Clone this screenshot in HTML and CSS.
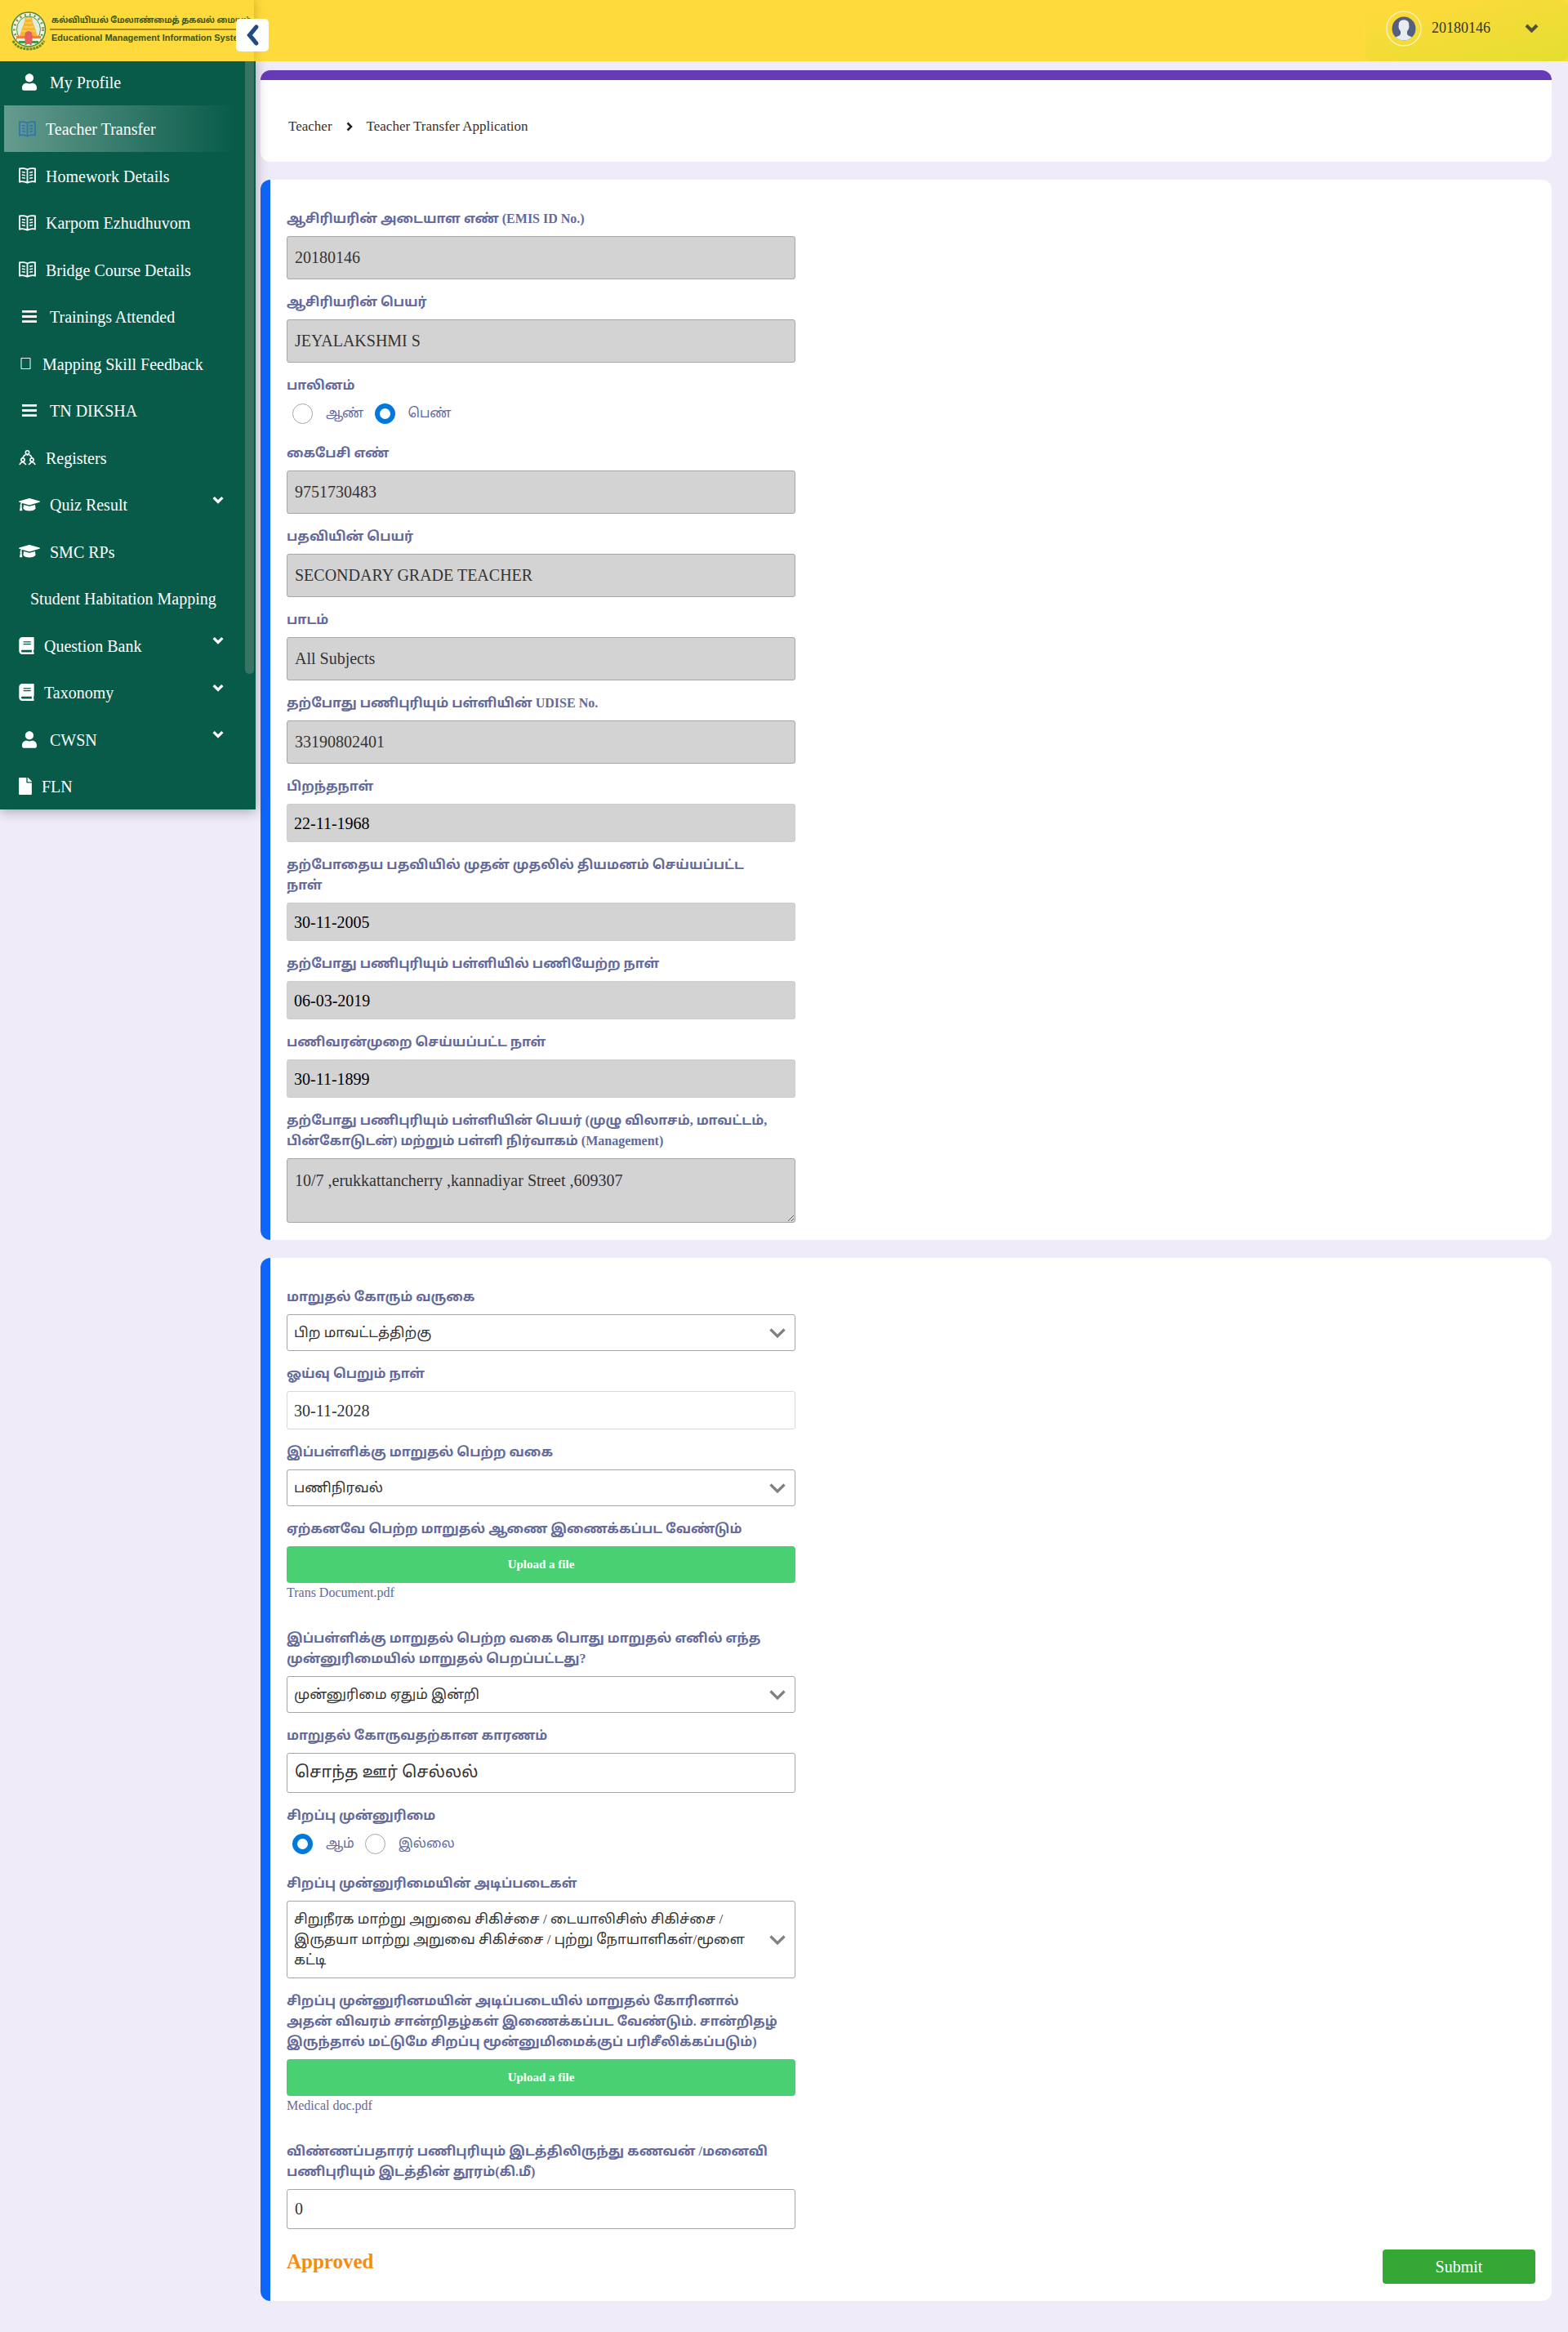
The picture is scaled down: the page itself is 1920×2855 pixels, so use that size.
FILE: index.html
```html
<!DOCTYPE html>
<html lang="ta">
<head>
<meta charset="utf-8">
<meta name="viewport" content="width=device-width, initial-scale=1">
<title>Teacher Transfer Application</title>
<link rel="stylesheet" href="styles.css">
</head>
<body>
<svg class="sprite" aria-hidden="true">
  <symbol id="i-user" viewBox="0 0 448 512"><path d="M224 256c70.700 0 128-57.300 128-128S294.700 0 224 0 96 57.300 96 128s57.300 128 128 128zm89.600 32h-16.700c-22.200 10.200-46.900 16-72.900 16s-50.600-5.800-72.900-16h-16.700C60.200 288 0 348.200 0 422.400V464c0 26.500 21.500 48 48 48h352c26.500 0 48-21.500 48-48v-41.600c0-74.200-60.200-134.400-134.400-134.400z"/></symbol>
  <symbol id="i-reader" viewBox="0 0 21 20"><g fill="none" stroke="currentColor" stroke-width="1.800"><path d="M1 1.500Q6 .5 10.500 2.500Q15 .5 20 1.500V17.500Q15 16.500 10.500 18.800Q6 16.500 1 17.500ZM10.500 2.500V18.500"/><path stroke-width="1.600" d="M3.800 5.500l4 .8M3.800 9l4 .8M3.800 12.500l4 .8M17.200 5.500l-4 .8M17.200 9l-4 .8M17.200 12.500l-4 .8"/></g></symbol>
  <symbol id="i-bars" viewBox="0 0 19 17"><path d="M0 .5h19v3H0zM0 7h19v3H0zM0 13.500h19v3H0z"/></symbol>
  <symbol id="i-box" viewBox="0 0 12 14"><path fill="none" stroke="currentColor" d="M.5.5h11v13H.5z"/></symbol>
  <symbol id="i-group" viewBox="0 0 21 18"><g fill="none" stroke="currentColor" stroke-width="1.600"><circle cx="10.500" cy="3" r="2.200"/><path d="M8.500 5.500Q5.500 7 5 9.500M12.500 5.500Q15.500 7 16 9.500"/><circle cx="5" cy="12" r="2.100"/><circle cx="16" cy="12" r="2.100"/><path d="M1 18Q1.500 15.500 4 15L5 14.500L9 17.800M20 18Q19.500 15.500 17 15L16 14.500L12 17.800M10.500 5.500V7"/></g></symbol>
  <symbol id="i-cap" viewBox="0 0 26 16"><path d="M12 .2Q13 0 14 .2L25.400 3.600Q26.600 4.200 25.400 4.800L14 8.200Q13 8.500 12 8.200L4.500 6Q3.300 6.500 3.300 8Q4.300 9 3.500 10L4.300 14.800Q4.300 15.300 3.900 15.300H1.400Q1 15.300 1 14.800L1.900 10Q1 9 1.900 8Q2 6.400 2.900 5.500L.6 4.800Q-.6 4.200.6 3.600ZM6 7.900L11.600 9.600Q13 10 14.400 9.600L20 7.900L20.600 12.500Q19 15.500 13 15.500T5.400 12.500Z"/></symbol>
  <symbol id="i-book" viewBox="0 0 448 512"><path d="M448 360V24c0-13.300-10.700-24-24-24H96C43 0 0 43 0 96v320c0 53 43 96 96 96h328c13.300 0 24-10.700 24-24v-16c0-7.500-3.500-14.300-8.900-18.700-4.200-15.400-4.200-59.300 0-74.700 5.400-4.300 8.900-11.100 8.900-18.600zM128 134c0-3.300 2.700-6 6-6h212c3.300 0 6 2.700 6 6v20c0 3.300-2.700 6-6 6H134c-3.300 0-6-2.700-6-6v-20zm0 64c0-3.300 2.700-6 6-6h212c3.300 0 6 2.700 6 6v20c0 3.300-2.700 6-6 6H134c-3.300 0-6-2.700-6-6v-20zm253.400 250H96c-17.700 0-32-14.300-32-32 0-17.600 14.400-32 32-32h285.400c-1.900 17.100-1.900 46.900 0 64z"/></symbol>
  <symbol id="i-file" viewBox="0 0 384 512"><path d="M224 136V0H24C10.700 0 0 10.700 0 24v464c0 13.300 10.700 24 24 24h336c13.300 0 24-10.700 24-24V160H248c-13.200 0-24-10.800-24-24zm160-14.100v6.100H256V0h6.100c6.400 0 12.500 2.500 17 7l97.900 98c4.500 4.500 7 10.600 7 16.900z"/></symbol>
  <symbol id="i-down" viewBox="0 0 17 11"><path d="M2 2l6.500 6.500L15 2" fill="none" stroke="currentColor" stroke-width="4"/></symbol>
</svg>

<header class="topbar">
  <div class="brand">
    <svg class="emblem" viewBox="0 0 44 48" aria-hidden="true">
      <ellipse cx="22" cy="22" rx="20.500" ry="21" fill="#f4f3df" stroke="#4b8a3f" stroke-width="1.500"/>
      <ellipse cx="22" cy="22" rx="17.500" ry="18" fill="none" stroke="#7d9a50" stroke-width="3" stroke-dasharray="2 4"/>
      <ellipse cx="22" cy="22" rx="14.500" ry="16" fill="#dfeedd" stroke="#52934a"/>
      <path d="M18 7h8l1 6 3 8 3 9H11l3-9 3-8z" fill="#f9b52c"/>
      <path d="M19 9h6M18 14h8M16 19h12M14 24h16" stroke="#fbd768" stroke-width="1.500"/>
      <path d="M7 30h30v3H7z" fill="#f0803c"/><path d="M8 33h28v3H8z" fill="#fff"/><path d="M10 36h24v3H10z" fill="#3f9a4b"/>
      <path d="M18 26q4-4 8 0l1 5-1 9h-8l-1-9z" fill="#e8605c"/>
      <path d="M3 36q5 10 19 10t19-10" fill="none" stroke="#6f8a1d" stroke-width="3" stroke-dasharray="3 1"/>
    </svg>
    <div class="brand-text">
      <span class="brand-ta">கல்வியியல் மேலாண்மைத் தகவல் மையம்</span>
      <span class="brand-en">Educational Management Information System</span>
    </div>
    <button class="collapse" type="button" aria-label="Collapse menu"><svg viewBox="0 0 18 30"><path d="M14.500 3.500L5 15L14.500 26.500" fill="none" stroke="#224b80" stroke-width="6" stroke-linecap="round"/></svg></button>
  </div>
  <button class="account" type="button">
    <svg class="avatar" viewBox="0 0 44 44" aria-hidden="true">
      <clipPath id="face"><circle cx="22" cy="22" r="14.500"/></clipPath>
      <circle cx="22" cy="22" r="21" fill="none" stroke="#fff" stroke-opacity=".85" stroke-width="1.200"/>
      <circle cx="22" cy="22" r="14.500" fill="#556080"/>
      <path clip-path="url(#face)" fill="#e7eced" d="M22 11.300q6.500 0 6.300 6.500q.8 4-2.300 7.500v3.200q.5 2 5 3.500q3 1.500 4 5H9q1-3.500 4-5q4.500-1.500 5-3.500v-3.200q-3.100-3.500-2.300-7.500q-.2-6.500 6.300-6.500z"/>
    </svg>
    <span class="account-id">20180146</span>
    <svg class="account-caret" aria-hidden="true"><use href="#i-down"/></svg>
  </button>
</header>

<div class="shell">
  <nav class="sidebar" aria-label="Main menu">
    <ul class="menu">
      <li><a href="#" class="wide"><svg class="ic-user"><use href="#i-user"/></svg>My Profile</a></li>
      <li><a href="#" class="active"><svg class="ic-reader"><use href="#i-reader"/></svg>Teacher Transfer</a></li>
      <li><a href="#"><svg class="ic-reader"><use href="#i-reader"/></svg>Homework Details</a></li>
      <li><a href="#"><svg class="ic-reader"><use href="#i-reader"/></svg>Karpom Ezhudhuvom</a></li>
      <li><a href="#"><svg class="ic-reader"><use href="#i-reader"/></svg>Bridge Course Details</a></li>
      <li><a href="#" class="wide"><svg class="ic-user"><use href="#i-bars"/></svg>Trainings Attended</a></li>
      <li><a href="#"><svg class="ic-box"><use href="#i-box"/></svg>Mapping Skill Feedback</a></li>
      <li><a href="#" class="wide"><svg class="ic-user"><use href="#i-bars"/></svg>TN DIKSHA</a></li>
      <li><a href="#"><svg class="ic-reader"><use href="#i-group"/></svg>Registers</a></li>
      <li><a href="#"><svg class="ic-cap"><use href="#i-cap"/></svg>Quiz Result<svg class="caret"><use href="#i-down"/></svg></a></li>
      <li><a href="#"><svg class="ic-cap"><use href="#i-cap"/></svg>SMC RPs</a></li>
      <li><a href="#" class="plain">Student Habitation Mapping</a></li>
      <li><a href="#"><svg class="ic-book"><use href="#i-book"/></svg>Question Bank<svg class="caret"><use href="#i-down"/></svg></a></li>
      <li><a href="#"><svg class="ic-book"><use href="#i-book"/></svg>Taxonomy<svg class="caret"><use href="#i-down"/></svg></a></li>
      <li><a href="#" class="wide"><svg class="ic-user"><use href="#i-user"/></svg>CWSN<svg class="caret"><use href="#i-down"/></svg></a></li>
      <li><a href="#"><svg class="ic-file"><use href="#i-file"/></svg>FLN</a></li>
    </ul>
    <span class="scroll-thumb"></span>
  </nav>

  <main class="content">
    <nav class="crumbs" aria-label="Breadcrumb">
      <a href="#">Teacher</a>
      <svg viewBox="0 0 8 12" aria-hidden="true"><path d="M1.500 1.500L6 6L1.500 10.500" fill="none" stroke="#222" stroke-width="2.500"/></svg>
      <a href="#">Teacher Transfer Application</a>
    </nav>

    <form class="forms">
      <section class="panel">
        <div class="fields">
          <div class="field"><label for="emis">ஆசிரியரின் அடையாள எண் (EMIS ID No.)</label><input id="emis" class="box tall" type="text" value="20180146" readonly></div>
          <div class="field"><label for="name">ஆசிரியரின் பெயர்</label><input id="name" class="box tall" type="text" value="JEYALAKSHMI S" readonly></div>
          <fieldset class="field">
            <legend>பாலினம்</legend>
            <div class="radios">
              <label><input type="radio" name="gender">ஆண்</label>
              <label><input type="radio" name="gender" checked>பெண்</label>
            </div>
          </fieldset>
          <div class="field"><label for="mobile">கைபேசி எண்</label><input id="mobile" class="box tall" type="text" value="9751730483" readonly></div>
          <div class="field"><label for="post">பதவியின் பெயர்</label><input id="post" class="box tall" type="text" value="SECONDARY GRADE TEACHER" readonly></div>
          <div class="field"><label for="subject">பாடம்</label><input id="subject" class="box tall" type="text" value="All Subjects" readonly></div>
          <div class="field"><label for="udise">தற்போது பணிபுரியும் பள்ளியின் UDISE No.</label><input id="udise" class="box tall" type="text" value="33190802401" readonly></div>
          <div class="field"><label for="dob">பிறந்தநாள்</label><input id="dob" class="box date" type="text" value="22-11-1968" readonly></div>
          <div class="field"><label for="first">தற்போதைய பதவியில் முதன் முதலில் தியமனம் செய்யப்பட்ட<br>நாள்</label><input id="first" class="box date" type="text" value="30-11-2005" readonly></div>
          <div class="field"><label for="joined">தற்போது பணிபுரியும் பள்ளியில் பணியேற்ற நாள்</label><input id="joined" class="box date" type="text" value="06-03-2019" readonly></div>
          <div class="field"><label for="regular">பணிவரன்முறை செய்யப்பட்ட நாள்</label><input id="regular" class="box date" type="text" value="30-11-1899" readonly></div>
          <div class="field"><label for="school">தற்போது பணிபுரியும் பள்ளியின் பெயர் (முழு விலாசம், மாவட்டம்,<br>பின்கோடுடன்) மற்றும் பள்ளி நிர்வாகம் (Management)</label><textarea id="school" class="box" readonly>10/7 ,erukkattancherry ,kannadiyar Street ,609307</textarea></div>
        </div>
      </section>

      <section class="panel">
        <div class="fields">
          <div class="field"><label for="kind">மாறுதல் கோரும் வருகை</label><select id="kind" class="pick"><option>பிற மாவட்டத்திற்கு</option></select></div>
          <div class="field"><label for="retire">ஓய்வு பெறும் நாள்</label><input id="retire" class="box pale" type="text" value="30-11-2028"></div>
          <div class="field"><label for="prev">இப்பள்ளிக்கு மாறுதல் பெற்ற வகை</label><select id="prev" class="pick"><option>பணிநிரவல்</option></select></div>
          <div class="field"><label for="order">ஏற்கனவே பெற்ற மாறுதல் ஆணை இணைக்கப்பட வேண்டும்</label><button id="order" class="upload" type="button">Upload a file</button><a href="#" class="file-name">Trans Document.pdf</a></div>
          <div class="field"><label for="prio">இப்பள்ளிக்கு மாறுதல் பெற்ற வகை பொது மாறுதல் எனில் எந்த<br>முன்னுரிமையில் மாறுதல் பெறப்பட்டது?</label><select id="prio" class="pick"><option>முன்னுரிமை ஏதும் இன்றி</option></select></div>
          <div class="field"><label for="reason">மாறுதல் கோருவதற்கான காரணம்</label><input id="reason" class="box" type="text" value="சொந்த ஊர் செல்லல்"></div>
          <fieldset class="field">
            <legend>சிறப்பு முன்னுரிமை</legend>
            <div class="radios">
              <label><input type="radio" name="special" checked>ஆம்</label>
              <label><input type="radio" name="special">இல்லை</label>
            </div>
          </fieldset>
          <div class="field"><label for="basis">சிறப்பு முன்னுரிமையின் அடிப்படைகள்</label><select id="basis" class="pick lines"><option>சிறுநீரக மாற்று அறுவை சிகிச்சை / டையாலிசிஸ் சிகிச்சை / இருதயா மாற்று அறுவை சிகிச்சை / புற்று நோயாளிகள்/மூளை கட்டி</option></select></div>
          <div class="field"><label for="proof">சிறப்பு முன்னுரினமயின் அடிப்படையில் மாறுதல் கோரினால்<br>அதன் விவரம் சான்றிதழ்கள் இணைக்கப்பட வேண்டும். சான்றிதழ்<br>இருந்தால் மட்டுமே சிறப்பு மூன்னுமிமைக்குப் பரிசீலிக்கப்படும்)</label><button id="proof" class="upload" type="button">Upload a file</button><a href="#" class="file-name">Medical doc.pdf</a></div>
          <div class="field"><label for="distance">விண்ணப்பதாரர் பணிபுரியும் இடத்திலிருந்து கணவன் /மனைவி<br>பணிபுரியும் இடத்தின் தூரம்(கி.மீ)</label><input id="distance" class="box" type="text" value="0"></div>
        </div>
        <div class="actions">
          <strong class="status">Approved</strong>
          <button class="submit" type="submit">Submit</button>
        </div>
      </section>
    </form>
  </main>
</div>
</body>
</html>
```
FILE: styles.css
```css
* { box-sizing: border-box; }

body {
  margin: 0;
  background: #efebf8;
  color: #333;
  font-family: "Liberation Serif", "Latha", "Noto Sans Tamil", "Lohit Tamil", serif;
  font-size: 20px;
}

a { color: inherit; text-decoration: none; }
button, input, select, textarea { font: inherit; }
.sprite { display: none; }
svg { fill: currentColor; flex: none; }

/* top bar */
.topbar {
  display: flex;
  justify-content: space-between;
  height: 75px;
  background: #ffda3c;
  position: relative;
  z-index: 2;
}

.brand {
  position: relative;
  display: flex;
  gap: 4px;
  width: 311px;
  padding: 14px 20px 0 13px;
  box-shadow: 0 0 12px rgba(110, 80, 0, .35);
  clip-path: inset(0 -40px 0 0);
}

.emblem { width: 44px; height: 48px; }

.brand-text {
  flex: 1;
  min-width: 0;
  white-space: nowrap;
  color: #3f5512;
  font-weight: bold;
}

.brand-text span { display: block; padding-left: 2px; }
.brand-ta { height: 23px; border-bottom: 2px solid #a58a1c; font-size: 10px; line-height: 22px; }
.brand-en { font-family: "Liberation Sans", sans-serif; font-size: 11px; line-height: 18px; }

.collapse {
  position: absolute;
  top: 23px;
  right: -18px;
  width: 40px;
  height: 40px;
  padding: 0;
  border: 0;
  border-radius: 5px;
  background: #fff;
}

.collapse svg { width: 18px; height: 26px; display: block; margin: auto; }

.account {
  display: flex;
  align-items: center;
  width: 248px;
  padding: 0 36px 6px 25px;
  border: 0;
  border-radius: 8px;
  background: linear-gradient(165deg, #ffda3c 10%, #e3de2f);
  color: #333;
  font-size: 18px;
}

.avatar { width: 44px; height: 44px; margin-right: 12px; }
.account-caret { width: 17px; height: 11px; margin-left: auto; color: #555133; }

/* side menu; the shell tucks under the top bar */
.shell { display: flex; align-items: flex-start; margin-top: -4px; }

.sidebar {
  position: relative;
  flex: none;
  width: 313px;
  background: #085b49;
  color: #fff;
  box-shadow: 0 2px 14px rgba(60, 40, 70, .4);
}

.menu {
  display: grid;
  grid-auto-rows: 1fr;
  min-height: 920px;
  margin: 0;
  padding: 0 13px 0 5px;
  list-style: none;
}

.menu a {
  display: flex;
  align-items: center;
  gap: 12px;
  height: 100%;
  padding: 3px 26px 0 18px;
}

.menu a svg { margin-bottom: 2px; }
.menu .wide { padding-left: 22px; gap: 16px; }
.menu .plain { padding-left: 32px; }
.menu .active { background: linear-gradient(90deg, #659b8e, #085b49 96%); }
.menu .active svg { color: #2f75b5; }
.ic-user { width: 18px; height: 21px; }
.ic-reader { width: 21px; height: 20px; }
.ic-box { width: 17px; height: 14px; }
.ic-cap { width: 26px; height: 16px; }
.ic-book { width: 19px; height: 21px; }
.ic-file { width: 16px; height: 21px; }
.menu a .caret { width: 14px; height: 10px; margin: 0 0 14px auto; }

.scroll-thumb {
  position: absolute;
  top: 0;
  right: 2px;
  width: 11px;
  height: 82%;
  border-radius: 0 0 5px 5px;
  background: #387464;
}

/* content */
.content {
  flex: 1;
  min-width: 0;
  padding: 15px 20px 38px 6px;
}

.crumbs {
  display: flex;
  align-items: center;
  gap: 17px;
  height: 112px;
  padding: 14px 34px 0;
  border-top: 12px solid #673ab7;
  border-radius: 12px;
  background: #fff;
  font-size: 17px;
}

.crumbs svg { width: 8px; height: 12px; }

.forms { display: grid; gap: 22px; margin-top: 22px; }

.panel {
  padding: 20px 20px 21px;
  border-left: 12px solid #0f65f7;
  border-radius: 12px;
  background: #fff;
}

.fields { width: calc(100% * 5 / 12 - 14px); }

.field {
  display: flex;
  flex-direction: column;
  min-width: 0;
  margin: 0;
  padding: 15px 0 0;
  border: 0;
}

.field > label,
.field > legend {
  display: block;
  margin-bottom: 9px;
  padding: 0;
  color: #636a9b;
  font-size: 16px;
  font-weight: bold;
  line-height: 25px;
  white-space: nowrap;
}

.field > legend { float: left; margin: 0; }

.box,
.pick {
  width: 100%;
  height: 49px;
  padding: 0 9px;
  border: 1px solid #a6a6a6;
  border-radius: 3px;
  background: #fff;
  color: #333;
}

.box[readonly] { background: #d3d3d3; }
.tall { height: 53px; }
.date { height: 47px; padding: 1px 8px 0; color: #000; border-color: #cdcdcd; }
.pale { height: 47px; padding: 1px 8px 0; border-color: #d8d8d8; }
textarea.box { display: block; height: 79px; padding: 14px 9px; line-height: 24px; resize: vertical; }

.pick {
  appearance: none;
  height: 45px;
  padding: 0 42px 0 8px;
  background: #fff url("data:image/svg+xml,%3Csvg xmlns='http://www.w3.org/2000/svg' viewBox='0 0 20 12'%3E%3Cpath d='M1.500 1.500L10 10L18.500 1.500' fill='none' stroke='%23808080' stroke-width='3.200'/%3E%3C/svg%3E") no-repeat right 11px center / 20px 12px;
  font-size: 17px;
  line-height: 25px;
}

.lines {
  appearance: base-select;
  height: auto;
  min-height: 45px;
  padding: 9px 54px 9px 8px;
  white-space: normal;
}

.lines::picker-icon { display: none; }

.radios {
  display: flex;
  clear: both;
  gap: 13px;
  padding: 10px 7px 8px;
}

.radios label {
  display: flex;
  align-items: center;
  gap: 16px;
  height: 25px;
  color: #636a9b;
  font-size: 16px;
}

.radios input {
  appearance: none;
  width: 25px;
  height: 25px;
  margin: 0;
  border: 1px solid #a6a6a6;
  border-radius: 50%;
  background: #fff;
}

.radios input:checked { border: 6px solid #0078dc; }

.upload {
  height: 45px;
  border: 0;
  border-radius: 4px;
  background: #48d073;
  color: #fff;
  font-size: 15px;
  font-weight: bold;
}

.file-name {
  height: 40px;
  color: #636a9b;
  font-size: 16px;
  line-height: 24px;
}

.actions {
  display: flex;
  justify-content: space-between;
  margin-top: 25px;
}

.status { color: #f68c0f; font-size: 25px; line-height: 30px; }

.submit {
  width: 187px;
  height: 42px;
  border: 0;
  border-radius: 4px;
  background: #34a734;
  color: #fff;
}
```
